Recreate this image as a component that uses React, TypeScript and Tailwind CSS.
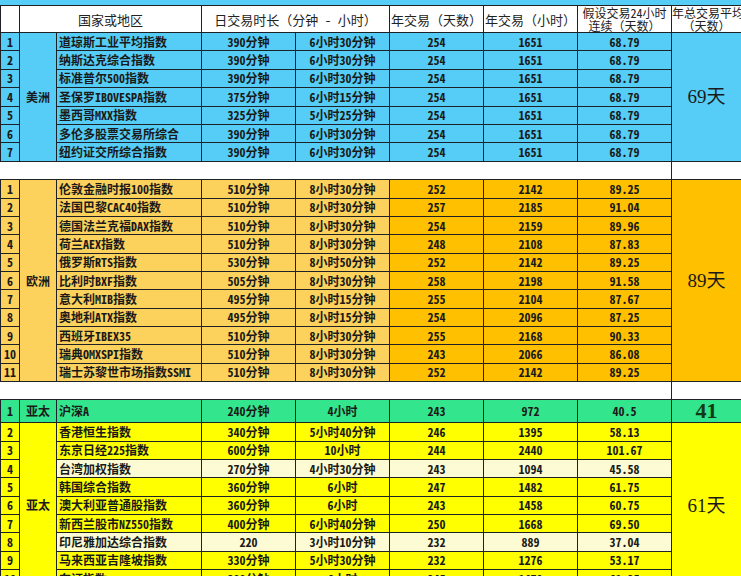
import React from 'react';

type Row = {
  no: number;
  name: string;
  min: string;
  hrs: string;
  days: string;
  hours: string;
  cont: string;
  noBg: string;
  midBg: string;
  rightBg: string;
};

const BLUE = 'bg-[#55cdf6]';
const LIGHT_ORANGE = 'bg-[#fcd25c]';
const ORANGE = 'bg-[#ffc000]';
const GREEN = 'bg-[#33e58c]';
const YELLOW = 'bg-[#ffff00]';
const CREAM = 'bg-[#fdfbd3]';

const america: [string, string, string][] = [
  ['道琼斯工业平均指数', '390分钟', '6小时30分钟'],
  ['纳斯达克综合指数', '390分钟', '6小时30分钟'],
  ['标准普尔500指数', '390分钟', '6小时30分钟'],
  ['圣保罗IBOVESPA指数', '375分钟', '6小时15分钟'],
  ['墨西哥MXX指数', '325分钟', '5小时25分钟'],
  ['多伦多股票交易所综合', '390分钟', '6小时30分钟'],
  ['纽约证交所综合指数', '390分钟', '6小时30分钟'],
];

const europe: [string, string, string, string, string, string][] = [
  ['伦敦金融时报100指数', '510分钟', '8小时30分钟', '252', '2142', '89.25'],
  ['法国巴黎CAC40指数', '510分钟', '8小时30分钟', '257', '2185', '91.04'],
  ['德国法兰克福DAX指数', '510分钟', '8小时30分钟', '254', '2159', '89.96'],
  ['荷兰AEX指数', '510分钟', '8小时30分钟', '248', '2108', '87.83'],
  ['俄罗斯RTS指数', '530分钟', '8小时50分钟', '252', '2142', '89.25'],
  ['比利时BXF指数', '505分钟', '8小时30分钟', '258', '2198', '91.58'],
  ['意大利MIB指数', '495分钟', '8小时15分钟', '255', '2104', '87.67'],
  ['奥地利ATX指数', '495分钟', '8小时15分钟', '254', '2096', '87.25'],
  ['西班牙IBEX35', '510分钟', '8小时30分钟', '255', '2168', '90.33'],
  ['瑞典OMXSPI指数', '510分钟', '8小时30分钟', '243', '2066', '86.08'],
  ['瑞士苏黎世市场指数SSMI', '510分钟', '8小时30分钟', '252', '2142', '89.25'],
];

const asia: [string, string, string, string, string, string, boolean][] = [
  ['香港恒生指数', '340分钟', '5小时40分钟', '246', '1395', '58.13', false],
  ['东京日经225指数', '600分钟', '10小时', '244', '2440', '101.67', false],
  ['台湾加权指数', '270分钟', '4小时30分钟', '243', '1094', '45.58', true],
  ['韩国综合指数', '360分钟', '6小时', '247', '1482', '61.75', false],
  ['澳大利亚普通股指数', '360分钟', '6小时', '243', '1458', '60.75', false],
  ['新西兰股市NZ550指数', '400分钟', '6小时40分钟', '250', '1668', '69.50', false],
  ['印尼雅加达综合指数', '220', '3小时10分钟', '232', '889', '37.04', true],
  ['马来西亚吉隆坡指数', '330分钟', '5小时30分钟', '232', '1276', '53.17', false],
  ['东证指数', '300分钟', '6小时', '245', '1470', '61.25', false],
];

const cell = 'border border-[#1e2226] p-0 text-center whitespace-nowrap overflow-hidden';

function Cells({ r }: { r: Row }) {
  return (
    <>
      <td className={`${cell} ${r.midBg} text-left pl-[2px]`}>{r.name}</td>
      <td className={`${cell} ${r.midBg}`}>{r.min}</td>
      <td className={`${cell} ${r.midBg}`}>{r.hrs}</td>
      <td className={`${cell} ${r.rightBg}`}>{r.days}</td>
      <td className={`${cell} ${r.rightBg}`}>{r.hours}</td>
      <td className={`${cell} ${r.rightBg}`}>{r.cont}</td>
    </>
  );
}

function Gap() {
  return (
    <tr className="h-[18.5px]">
      <td colSpan={8} className="p-0 bg-white" />
      <td className="p-0 bg-white border-l border-[#1e2226]" />
    </tr>
  );
}

export default function App() {
  const total = "font-['Liberation_Serif','Noto_Sans_CJK_SC',serif] text-[19px] font-normal text-[#1a1a1a]";

  return (
    <div className="w-[741px] h-[576px] overflow-hidden bg-white font-['Noto_Sans_Mono_CJK_SC','Liberation_Mono','Noto_Sans_CJK_SC',monospace] text-[12px] leading-none text-[#1a1a1a]">
      <div className={`h-[5px] ${BLUE}`} />
      <table className="w-[741px] table-fixed border-collapse">
        <colgroup>
          <col className="w-[19px]" />
          <col className="w-[37px]" />
          <col className="w-[145px]" />
          <col className="w-[94px]" />
          <col className="w-[94px]" />
          <col className="w-[94px]" />
          <col className="w-[94px]" />
          <col className="w-[94px]" />
          <col className="w-[70px]" />
        </colgroup>
        <thead>
          <tr className="h-[26px] bg-white font-normal text-[#222]">
            <th className={`${cell} font-normal`} />
            <th colSpan={2} className={`${cell} font-normal text-[13px]`}>国家或地区</th>
            <th colSpan={2} className={`${cell} font-normal text-[13px]`}>日交易时长（分钟 - 小时）</th>
            <th className={`${cell} font-normal text-[13px]`}>年交易（天数）</th>
            <th className={`${cell} font-normal text-[13px]`}>年交易（小时）</th>
            <th className={`${cell} font-normal leading-[13px]`}>
              假设交易24小时
              <br />
              连续（天数）
            </th>
            <th className={`${cell} font-normal leading-[13px]`}>
              年总交易平均
              <br />
              （天数）
            </th>
          </tr>
        </thead>
        <tbody className="font-bold">
          {america.map(([name, min, hrs], i) => (
            <tr key={`a${i}`} className="h-[18.4px]">
              <td className={`${cell} ${BLUE}`}>{i + 1}</td>
              {i === 0 && (
                <td rowSpan={7} className={`${cell} ${BLUE}`}>美洲</td>
              )}
              <Cells
                r={{ no: i + 1, name, min, hrs, days: '254', hours: '1651', cont: '68.79', noBg: BLUE, midBg: BLUE, rightBg: BLUE }}
              />
              {i === 0 && (
                <td rowSpan={7} className={`${cell} ${BLUE} ${total}`}>69天</td>
              )}
            </tr>
          ))}
          <Gap />
          {europe.map(([name, min, hrs, days, hours, cont], i) => (
            <tr key={`e${i}`} className="h-[18.33px]">
              <td className={`${cell} ${LIGHT_ORANGE}`}>{i + 1}</td>
              {i === 0 && (
                <td rowSpan={11} className={`${cell} ${LIGHT_ORANGE}`}>欧洲</td>
              )}
              <Cells
                r={{ no: i + 1, name, min, hrs, days, hours, cont, noBg: LIGHT_ORANGE, midBg: LIGHT_ORANGE, rightBg: ORANGE }}
              />
              {i === 0 && (
                <td rowSpan={11} className={`${cell} ${ORANGE} ${total}`}>89天</td>
              )}
            </tr>
          ))}
          <Gap />
          <tr className="h-[18.33px]">
            <td className={`${cell} ${GREEN}`}>1</td>
            <td className={`${cell} ${GREEN}`}>亚太</td>
            <Cells
              r={{ no: 1, name: '沪深A', min: '240分钟', hrs: '4小时', days: '243', hours: '972', cont: '40.5', noBg: GREEN, midBg: GREEN, rightBg: GREEN }}
            />
            <td className={`${cell} ${GREEN} font-['Liberation_Serif','Noto_Sans_CJK_SC',serif] text-[22px] text-[#123a16]`}>41</td>
          </tr>
          {asia.map(([name, min, hrs, days, hours, cont, light], i) => (
            <tr key={`p${i}`} className="h-[18.33px]">
              <td className={`${cell} ${YELLOW}`}>{i + 2}</td>
              {i === 0 && (
                <td rowSpan={9} className={`${cell} ${YELLOW}`}>亚太</td>
              )}
              <Cells
                r={{
                  no: i + 2,
                  name,
                  min,
                  hrs,
                  days,
                  hours,
                  cont,
                  noBg: YELLOW,
                  midBg: light ? CREAM : YELLOW,
                  rightBg: light ? CREAM : YELLOW,
                }}
              />
              {i === 0 && (
                <td rowSpan={9} className={`${cell} ${YELLOW} ${total}`}>61天</td>
              )}
            </tr>
          ))}
        </tbody>
      </table>
    </div>
  );
}
